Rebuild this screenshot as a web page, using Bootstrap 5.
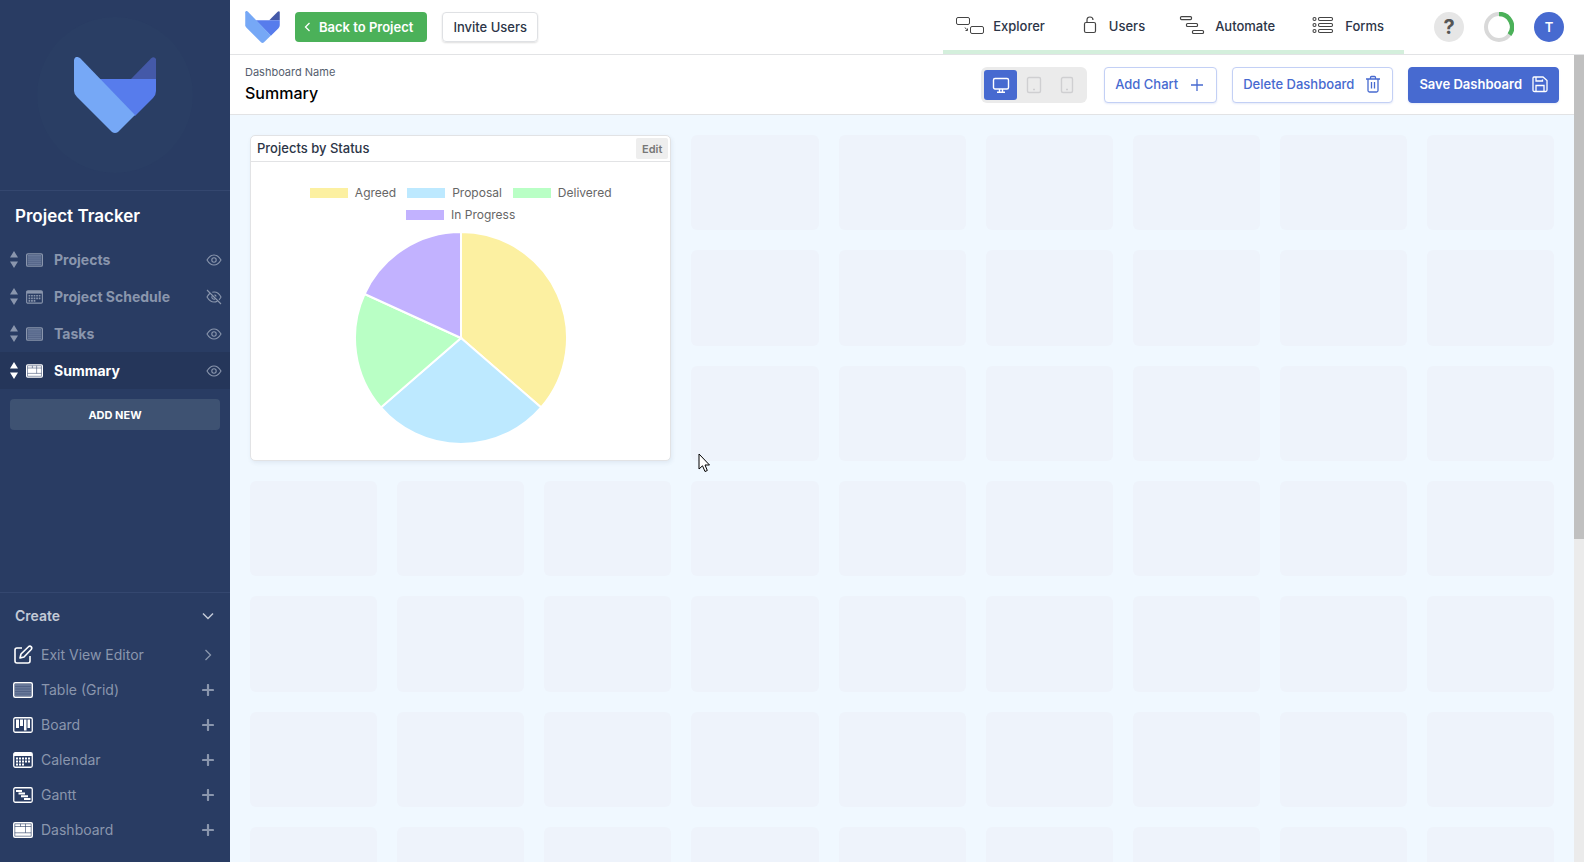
<!DOCTYPE html>
<html lang="en">
<head>
<meta charset="utf-8">
<meta name="viewport" content="width=device-width, initial-scale=1">
<title>Project Tracker - Summary</title>
<link href="https://cdn.jsdelivr.net/npm/bootstrap@5.3.0/dist/css/bootstrap.min.css" rel="stylesheet">
<style>
  :root { --navy: #293c63; --blue: #476ad0; --line: #e2e3e5; --ink: #2c3547; }
  body { font-family: Inter, "Liberation Sans", sans-serif; font-size: 13px; line-height: 20px; color: var(--ink); }
  svg { display: block; flex: none; }
  a { color: inherit; text-decoration: none; }
  button { color: inherit; }

  .sidebar { width: 230px; background: var(--navy); color: #8a96ad; }
  .brand-panel { height: 191px; border-bottom: 1px solid #34476f; }
  .brand-disc { width: 156px; height: 156px; border-radius: 50%; background: #2a3e64; }
  .app-title { font-size: 17px; line-height: 24px; font-weight: 600; color: #fff; padding: 13px 15px; margin: 0; }
  .view-item { height: 37px; padding: 0 8px 0 10px; font-size: 14px; font-weight: 700; }
  .view-item.current { background: #25365a; }
  .view-item.current a, .view-item.current .sort { color: #fff; }
  .view-item a { gap: 11px; margin-left: 8px; }
  .plain { border: 0; background: none; padding: 0; }
  .add-new { margin: 10px 10px 0; height: 31px; border: 0; border-radius: 4px; background: #3e5272; color: #fff; font-size: 11px; font-weight: 700; }
  .create-panel { border-top: 1px solid #34476f; padding: 2px 16px 15px 13px; }
  .create-head { height: 42px; padding-left: 2px; font-size: 14px; font-weight: 600; color: #c3cad7; }
  .create-row { height: 35px; font-size: 14px; gap: 8px; }
  .create-row > svg:first-child { color: #fff; }

  .topbar { height: 55px; border-bottom: 1px solid var(--line); padding: 0 20px 0 15px; }
  .start-tools { gap: 15px; }
  .btn { --bs-btn-font-size: 13px; --bs-btn-line-height: 20px; --bs-btn-font-weight: 500; --bs-btn-border-radius: 4px; white-space: nowrap; }
  .btn-back { height: 30px; padding: 0 13px 0 8px; gap: 7px; background: #4bb159; color: #fff; font-weight: 600; }
  .btn-invite { height: 30px; padding: 0 10px; border: 1px solid #dfe1e4; color: var(--ink); box-shadow: 0 1px 2px #0002; }
  .tabs { border-bottom: 4px solid #d4efdc; padding-top: 1px; font-weight: 500; }
  .tabs a { padding: 0 20px 0 12px; gap: 8px; }
  .discs { gap: 20px; margin-left: 30px; }
  .disc { width: 30px; height: 30px; border-radius: 50%; border: 0; padding: 0; }
  .disc-help { background: #e6e6e6; color: #555; font-size: 20px; font-weight: 700; }
  .disc-user { background: var(--blue); color: #fff; font-weight: 600; }

  .subbar { height: 60px; border-bottom: 1px solid var(--line); padding: 0 15px; background: #fff; }
  .name-label { font-size: 11px; line-height: 16px; color: #555e6e; }
  .name-input { border: 0; padding: 0; width: 240px; height: 26px; font-size: 16px; font-weight: 500; color: #000; background: none; }
  .tools { gap: 15px; }
  .devices { height: 36px; padding: 3px 4px 3px 3px; border-radius: 6px; background: #ebebeb; margin-right: 2px; }
  .devices button { width: 33px; height: 30px; border: 0; border-radius: 3px; background: none; color: #cfcfd1; }
  .devices button.on { background: var(--blue); color: #fff; }
  .btn-tool { height: 36px; padding: 0 11px 2px 10px; gap: 11px; border: 1px solid #c3d0f5; color: var(--blue); background: #fff; box-shadow: 0 1px 2px #476ad022; }
  .btn-tool.solid { padding-right: 10px; gap: 10px; background: var(--blue); border-color: var(--blue); color: #fff; font-weight: 600; }

  .canvas { background: #f0f8ff; padding: 20px; }
  .slots { display: grid; grid-template-columns: repeat(9, 1fr); gap: 20px; }
  .slot { aspect-ratio: 4 / 3; border-radius: 6px; background: #eef3fb; }
  .chart-card { grid-area: 1 / 1 / 4 / 4; border: 1px solid var(--line); border-radius: 5px; background: #fff; box-shadow: 1px 2px 4px #283c6314; }
  .chart-head { height: 26px; border-bottom: 1px solid var(--line); padding: 0 2px 0 6px; font-weight: 500; }
  .chart-head span { padding-bottom: 2px; }
  .btn-edit { height: 21px; border: 0; border-radius: 2px; background: #eee; color: #777; font-size: 11px; font-weight: 600; padding: 0 6px; }
  .legend { font-size: 12px; line-height: 22px; color: #666; padding: 20px 50px 6px; column-gap: 11px; }
  .legend i { width: 38px; height: 10px; margin-right: 7px; }
  .track { width: 10px; background: #ebebeb; }
  .thumb { height: 60%; background: #c0c0c0; }
  .pointer { position: absolute; left: 698px; top: 453px; }
</style>
</head>
<body>
<svg class="d-none" aria-hidden="true">
  <symbol id="logo" viewBox="0 0 82 76">
    <path d="M57 22 77 1.500Q80-1 82 2V22Z" fill="#4459a8"/>
    <path d="M25 22H82V34Q82 38 79 41L61 59Z" fill="#577cec"/>
    <path d="M0 3Q1-2 6 1L61 58 44 75Q41 77 38 75L3 40Q0 37 0 34Z" fill="#76a8f6"/>
  </symbol>
  <symbol id="sort" viewBox="0 0 8 17"><path d="M4 0 8 6.500H0ZM4 17 0 10.500H8Z" fill="currentColor"/></symbol>
  <symbol id="grid" viewBox="0 0 20 16">
    <rect x=".75" y=".75" width="18.500" height="14.500" rx="1.500" fill="none" stroke="currentColor" stroke-width="1.500"/>
    <path d="M2 2H18V14H2Z" fill="#7383a2" opacity=".85"/><path d="M2 4.500H18M2 7H18M2 9.500H18M2 12H18" stroke="#293c63" stroke-width=".5" opacity=".7"/>
  </symbol>
  <symbol id="board" viewBox="0 0 20 16">
    <rect x=".75" y=".75" width="18.500" height="14.500" rx="1.500" fill="none" stroke="currentColor" stroke-width="1.300"/>
    <path d="M3 2.500H6V11H3ZM7 2.500H10V9H7ZM11 2.500H13.500V13.500H11ZM14.500 2.500H17V11H14.500Z" fill="currentColor"/>
  </symbol>
  <symbol id="calendar" viewBox="0 0 20 16">
    <rect x=".75" y=".75" width="18.500" height="14.500" rx="1.500" fill="none" stroke="currentColor" stroke-width="1.300"/>
    <path d="M1 1H19V4H1Z" fill="currentColor"/>
    <path d="M3 6.500H17.500M3 9.500H17.500M3 12.500H12" stroke="currentColor" stroke-width="2" stroke-dasharray="2 1"/>
  </symbol>
  <symbol id="gantt" viewBox="0 0 20 16">
    <rect x=".75" y=".75" width="18.500" height="14.500" rx="1.500" fill="none" stroke="currentColor" stroke-width="1.300"/>
    <path d="M3 4H9M5.500 6.600H12M8 9.300H15M11 12H17.500" stroke="currentColor" stroke-width="2"/>
  </symbol>
  <symbol id="dash" viewBox="0 0 20 16">
    <rect width="20" height="16" rx="2" fill="currentColor"/>
    <path d="M1.800 1.800H18.200V14.200H1.800ZM1.800 4.500H18.200M1.800 10.800H18.200M7.500 1.800V4.500M12.500 1.800V10.800" fill="none" stroke="#293c63" stroke-width=".6"/>
  </symbol>
  <symbol id="eye" viewBox="0 0 16 16"><path d="M1 8Q4 3 8 3T15 8Q12 13 8 13T1 8Z" fill="none" stroke="currentColor" stroke-width="1.100"/><circle cx="8" cy="8" r="2.200" fill="none" stroke="currentColor" stroke-width="1.100"/></symbol>
  <symbol id="eye-off" viewBox="0 0 16 16"><path d="M4 4.300Q2.500 5.500 1 8 4 13 8 13 9.800 13 11.200 12.200M6.300 3.200Q12 2 15 8 14.200 9.600 13 10.800M6 7.200A2.200 2.200 0 0 0 9 10M8.500 5.900A2.200 2.200 0 0 1 10.200 7.500M1 1 15 15" fill="none" stroke="currentColor" stroke-width="1.100"/></symbol>
  <symbol id="plus" viewBox="0 0 12 12"><path d="M6 1V11M1 6H11" stroke="currentColor" stroke-width="2.200" stroke-linecap="round"/></symbol>
</svg>

<div class="d-flex vh-100 overflow-hidden">
  <aside class="sidebar d-flex flex-column flex-shrink-0">
    <div class="brand-panel d-flex align-items-center justify-content-center flex-shrink-0">
      <div class="brand-disc d-flex align-items-center justify-content-center"><svg width="82" height="76"><use href="#logo"/></svg></div>
    </div>
    <h1 class="app-title">Project Tracker</h1>
    <nav aria-label="Views">
      <div class="view-item d-flex align-items-center">
        <svg class="sort" width="8" height="17"><use href="#sort"/></svg>
        <a href="#" class="d-flex align-items-center flex-grow-1"><svg width="17" height="14"><use href="#grid"/></svg>Projects</a>
        <button class="plain" aria-label="Hide Projects"><svg width="16" height="16"><use href="#eye"/></svg></button>
      </div>
      <div class="view-item d-flex align-items-center">
        <svg class="sort" width="8" height="17"><use href="#sort"/></svg>
        <a href="#" class="d-flex align-items-center flex-grow-1"><svg width="17" height="14"><use href="#calendar"/></svg>Project Schedule</a>
        <button class="plain" aria-label="Show Project Schedule"><svg width="16" height="16"><use href="#eye-off"/></svg></button>
      </div>
      <div class="view-item d-flex align-items-center">
        <svg class="sort" width="8" height="17"><use href="#sort"/></svg>
        <a href="#" class="d-flex align-items-center flex-grow-1"><svg width="17" height="14"><use href="#grid"/></svg>Tasks</a>
        <button class="plain" aria-label="Hide Tasks"><svg width="16" height="16"><use href="#eye"/></svg></button>
      </div>
      <div class="view-item current d-flex align-items-center">
        <svg class="sort" width="8" height="17"><use href="#sort"/></svg>
        <a href="#" class="d-flex align-items-center flex-grow-1" aria-current="page"><svg width="17" height="14"><use href="#dash"/></svg>Summary</a>
        <button class="plain" aria-label="Hide Summary"><svg width="16" height="16"><use href="#eye"/></svg></button>
      </div>
    </nav>
    <button class="add-new">ADD NEW</button>
    <div class="create-panel mt-auto">
      <button class="plain create-head d-flex align-items-center justify-content-between w-100">Create
        <svg width="12" height="12" viewBox="0 0 12 12"><path d="M1 3.500 6 8.500 11 3.500" fill="none" stroke="currentColor" stroke-width="1.500"/></svg></button>
      <a href="#" class="create-row d-flex align-items-center">
        <svg width="20" height="20" viewBox="0 0 20 20"><path d="M9 3H4Q2 3 2 5V16Q2 18 4 18H15Q17 18 17 16V11M7 13 8 9 15.500 1.700Q17 .6 18.300 1.800 19.300 3 18.200 4.500L11 12Z" fill="none" stroke="currentColor" stroke-width="1.600" stroke-linejoin="round"/></svg>
        <span class="flex-grow-1">Exit View Editor</span><svg width="12" height="12" viewBox="0 0 12 12"><path d="M3.500 1 8.500 6 3.500 11" fill="none" stroke="currentColor" stroke-width="1.300"/></svg></a>
      <a href="#" class="create-row d-flex align-items-center"><svg width="20" height="16"><use href="#grid"/></svg><span class="flex-grow-1">Table (Grid)</span><svg width="12" height="12"><use href="#plus"/></svg></a>
      <a href="#" class="create-row d-flex align-items-center"><svg width="20" height="16"><use href="#board"/></svg><span class="flex-grow-1">Board</span><svg width="12" height="12"><use href="#plus"/></svg></a>
      <a href="#" class="create-row d-flex align-items-center"><svg width="20" height="16"><use href="#calendar"/></svg><span class="flex-grow-1">Calendar</span><svg width="12" height="12"><use href="#plus"/></svg></a>
      <a href="#" class="create-row d-flex align-items-center"><svg width="20" height="16"><use href="#gantt"/></svg><span class="flex-grow-1">Gantt</span><svg width="12" height="12"><use href="#plus"/></svg></a>
      <a href="#" class="create-row d-flex align-items-center"><svg width="20" height="16"><use href="#dash"/></svg><span class="flex-grow-1">Dashboard</span><svg width="12" height="12"><use href="#plus"/></svg></a>
    </div>
  </aside>

  <div class="d-flex flex-column flex-grow-1 overflow-hidden">
    <header class="topbar d-flex align-items-center flex-shrink-0">
      <div class="start-tools d-flex align-items-center">
        <svg width="35" height="32"><use href="#logo"/></svg>
        <a href="#" class="btn btn-back d-flex align-items-center"><svg width="8" height="12" viewBox="0 0 8 12"><path d="M5.500 2 1.500 6 5.500 10" fill="none" stroke="currentColor" stroke-width="1.300"/></svg>Back to Project</a>
        <button class="btn btn-invite">Invite Users</button>
      </div>
      <nav class="tabs d-flex align-self-stretch ms-auto" aria-label="Builder">
        <a href="#" class="d-flex align-items-center"><svg width="30" height="20" viewBox="0 0 30 20" fill="none" stroke="#444"><rect x="1.500" y="1.500" width="13" height="7" rx="1.500"/><rect x="15.500" y="10.500" width="13" height="7" rx="1.500"/><path d="M10 11.500 11.500 13.500M12.500 12.500V14.500H10.500"/></svg>Explorer</a>
        <a href="#" class="d-flex align-items-center"><svg width="24" height="20" viewBox="0 0 24 20" fill="none" stroke="#444" stroke-width="1.200"><rect x="7.500" y="6.500" width="11" height="10" rx="1.500"/><path d="M10 6.500V4Q10 1 13 1T16 4"/></svg>Users</a>
        <a href="#" class="d-flex align-items-center"><svg width="30" height="20" viewBox="0 0 30 20" fill="none" stroke="#444" stroke-width="1.200"><rect x="3.500" y=".6" width="11" height="3" rx="1"/><rect x="9.500" y="7.500" width="11" height="3" rx="1"/><rect x="15.500" y="14.500" width="11" height="3" rx="1"/></svg>Automate</a>
        <a href="#" class="d-flex align-items-center"><svg width="30" height="20" viewBox="0 0 30 20" fill="none" stroke="#444" stroke-width="1.100"><circle cx="7.500" cy="3" r="1.500"/><circle cx="7.500" cy="9" r="1.500"/><circle cx="7.500" cy="15" r="1.500"/><rect x="11.500" y="1.500" width="14" height="3" rx="1.200"/><rect x="11.500" y="7.500" width="14" height="3" rx="1.200"/><rect x="11.500" y="13.500" width="14" height="3" rx="1.200"/></svg>Forms</a>
      </nav>
      <div class="d-flex discs">
        <button class="disc disc-help" aria-label="Help">?</button>
        <svg width="30" height="30" viewBox="0 0 30 30" fill="none" stroke-width="4"><circle cx="15" cy="15" r="13" stroke="#d9d9d9"/><path d="M15 2A13 13 0 0 1 25.500 22.700" stroke="#4bb159" stroke-width="4.500"/></svg>
        <button class="disc disc-user" aria-label="Account">T</button>
      </div>
    </header>

    <div class="d-flex flex-grow-1 overflow-hidden">
      <main class="flex-grow-1 overflow-hidden">
        <div class="subbar d-flex align-items-center">
          <div class="d-flex flex-column">
            <label class="name-label" for="dashName">Dashboard Name</label>
            <input class="name-input" id="dashName" value="Summary">
          </div>
          <div class="d-flex ms-auto tools">
            <div class="devices d-flex" role="group" aria-label="Preview size">
              <button class="on d-flex align-items-center justify-content-center" aria-label="Desktop"><svg width="18" height="18" viewBox="0 0 18 18" fill="none" stroke="currentColor" stroke-width="1.400"><rect x="1.500" y="2.500" width="15" height="10.500" rx="1.500"/><path d="M7.500 13V16M10.500 13V16M5 16.300H13"/></svg></button>
              <button class="d-flex align-items-center justify-content-center" aria-label="Tablet"><svg width="18" height="18" viewBox="0 0 18 18" fill="none" stroke="currentColor" stroke-width="1.400"><rect x="2.500" y="1.500" width="13" height="15" rx="1.500"/><path d="M8 13.500H10"/></svg></button>
              <button class="d-flex align-items-center justify-content-center" aria-label="Phone"><svg width="18" height="18" viewBox="0 0 18 18" fill="none" stroke="currentColor" stroke-width="1.400"><rect x="3.500" y="1.500" width="11" height="15" rx="1.500"/><path d="M8 13.500H10"/></svg></button>
            </div>
            <button class="btn btn-tool d-flex align-items-center">Add Chart<svg width="16" height="16" viewBox="0 0 16 16"><path d="M8 3V15M2 9H14" stroke="currentColor" stroke-width="1.300"/></svg></button>
            <button class="btn btn-tool d-flex align-items-center">Delete Dashboard<svg width="16" height="18" viewBox="0 0 16 18" fill="none" stroke="currentColor" stroke-width="1.300"><path d="M1 4H15M3 4V15.500Q3 17 4.500 17H11.500Q13 17 13 15.500V4M5.500 4V2.500Q5.500 1.500 6.500 1.500H9.500Q10.500 1.500 10.500 2.500V4M6.500 7V13.500M9.500 7V13.500"/></svg></button>
            <button class="btn btn-tool solid d-flex align-items-center">Save Dashboard<svg width="16" height="18" viewBox="0 0 16 18" fill="none" stroke="currentColor" stroke-width="1.300"><path d="M2 2H11L15 5.500V15Q15 16.500 13.500 16.500H2.500Q1 16.500 1 15V3Q1 2 2 2ZM4 2V6H10.500V4.500M4 16.500V10.500H12V16.500"/></svg></button>
          </div>
        </div>

        <div class="canvas">
          <div class="slots" id="slots">
            <section class="chart-card">
              <div class="chart-head d-flex align-items-center justify-content-between"><span>Projects by Status</span><button class="btn-edit">Edit</button></div>
              <div class="legend d-flex flex-wrap justify-content-center" id="legend"></div>
              <svg class="mx-auto" width="212" height="212" viewBox="-106 -106 212 212" id="pie" role="img" aria-label="Projects by status"></svg>
            </section>
          </div>
        </div>
      </main>
      <div class="track flex-shrink-0"><div class="thumb"></div></div>
    </div>
  </div>
</div>
<svg class="pointer" width="13" height="20" viewBox="0 0 13 20"><path d="M1 1V16L4.500 12.800 7 18.500 9.300 17.500 7 12H11.500Z" fill="#fff" stroke="#000"/></svg>

<script src="https://cdn.jsdelivr.net/npm/bootstrap@5.3.0/dist/js/bootstrap.bundle.min.js"></script>
<script>
  const data = [["Agreed", 4, "#fcf0a1"], ["Proposal", 3, "#bde9ff"], ["Delivered", 2, "#b9ffc5"], ["In Progress", 2, "#c2b2ff"]];
  const total = data.reduce((sum, d) => sum + d[1], 0);
  const radius = 106;
  let angle = 0, slices = "", keys = "";
  const at = a => (radius * Math.sin(a)).toFixed(2) + " " + (-radius * Math.cos(a)).toFixed(2);
  for (const [name, count, color] of data) {
    const end = angle + 2 * Math.PI * count / total;
    slices += `<path d="M0 0L${at(angle)}A${radius} ${radius} 0 0 1 ${at(end)}Z" fill="${color}" stroke="#fff" stroke-width="2"/>`;
    keys += `<span class="d-flex align-items-center"><i style="background:${color}"></i>${name}</span>`;
    angle = end;
  }
  document.getElementById("pie").innerHTML = slices;
  document.getElementById("legend").innerHTML = keys;
  // Empty drop slots: six beside the chart in its three rows, nine in each row below
  document.getElementById("slots").insertAdjacentHTML("beforeend", '<div class="slot"></div>'.repeat(3 * 6 + 4 * 9));
</script>
</body>
</html>
